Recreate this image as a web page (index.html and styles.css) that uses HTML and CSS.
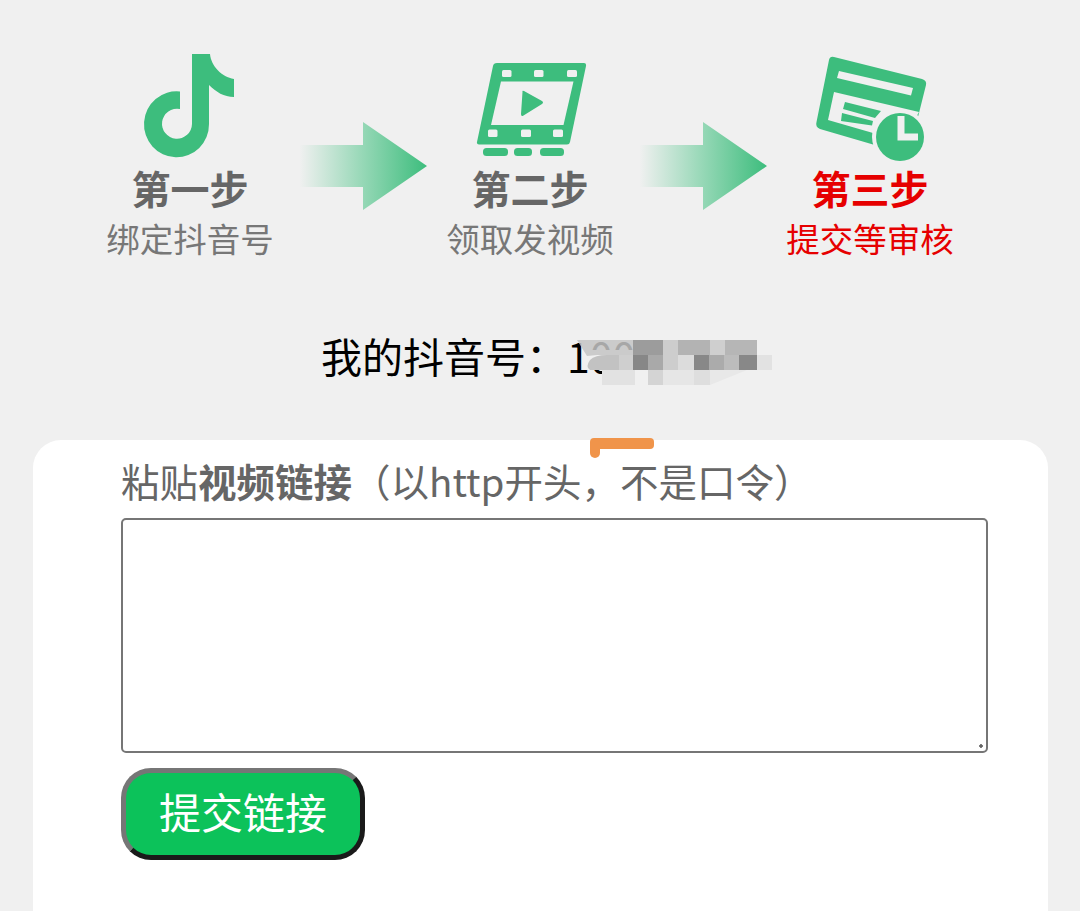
FILE: index.html
```html
<!DOCTYPE html>
<html lang="zh-CN">
<head>
<meta charset="utf-8">
<title>提交链接</title>
<link rel="stylesheet" href="styles.css">
</head>
<body>
<section class="steps">
  <div class="step">
    <svg class="step-icon" viewBox="130 50 120 110"><path class="g" d="M192 54H210C211 66 222 77 234 79V97C224 97 216 92 209 85V124A32.500 33 0 1 1 180 91.500V109A15 15 0 1 0 192 124Z"/></svg>
    <div class="step-title">第一步</div>
    <div class="step-sub">绑定抖音号</div>
  </div>
  <svg class="arrow" viewBox="0 0 130 90"><defs><linearGradient id="ag" x1="0" x2="1" y1="0" y2="0"><stop offset="0.02" stop-color="#f0f0f0"/><stop offset="0.5" stop-color="#97d8b7"/><stop offset="1" stop-color="#3dbd7d"/></linearGradient></defs><path fill="url(#ag)" d="M0 23H66V0L130 44L66 88V65H0Z"/></svg>
  <div class="step">
    <svg class="step-icon" viewBox="470 50 120 110">
      <path class="g" d="M497 63H584Q586.500 63 586 66L570 142Q569.500 144.500 567 144.500H479Q476.500 144.500 477 142L493 66Q493.500 63 497 63Z"/>
      <path class="w" d="M501 81.500H573.500L563.500 125H491Z"/>
      <path class="g" d="M524 91Q522 90 522.500 92L521 114Q521 117 523.500 115.500L542 104Q544 102.500 542 101Z"/>
      <rect class="w" x="502" y="70" width="9.500" height="7" rx="1.500"/><rect class="w" x="534" y="70" width="9.500" height="7" rx="1.500"/><rect class="w" x="567" y="70" width="10" height="7" rx="1.500"/>
      <rect class="w" x="488" y="129.500" width="9.500" height="7.500" rx="1.500"/><rect class="w" x="521" y="129.500" width="10" height="7.500" rx="1.500"/><rect class="w" x="553" y="129.500" width="10" height="7.500" rx="1.500"/>
      <rect class="g" x="483" y="148" width="25" height="8" rx="3.500"/><rect class="g" x="514" y="148" width="18" height="8" rx="3.500"/><rect class="g" x="540" y="148" width="24" height="8" rx="3.500"/>
    </svg>
    <div class="step-title">第二步</div>
    <div class="step-sub">领取发视频</div>
  </div>
  <svg class="arrow" viewBox="0 0 130 90"><path fill="url(#ag)" d="M0 23H66V0L130 44L66 88V65H0Z"/></svg>
  <div class="step">
    <svg class="step-icon" viewBox="810 50 120 110">
      <path class="g" d="M834 57L922 79Q927 80.500 926 85L916 125L873 144.500L820 129Q815 127 816.500 122L829 60Q830 56 834 57Z"/>
      <path class="w" d="M839 71L913 88L911 95.500L837 78Z"/>
      <path class="w" d="M834 92L919 112L905 137L873 133L828 120Z"/>
      <path class="g" d="M845 102L881 111L875 118L843 109Z"/>
      <path class="g" d="M842 113L873 121L872 125.500L841 121Z"/>
      <circle class="w" cx="900" cy="137" r="28"/>
      <circle class="g" cx="900" cy="137" r="24"/>
      <path class="hand" d="M901 116V137H918"/>
    </svg>
    <div class="step-title red">第三步</div>
    <div class="step-sub red">提交等审核</div>
  </div>
</section>

<div class="account">
  <span>我的抖音号&#xFF1A;100</span>
  <svg class="mosaic" viewBox="0 0 220 70" aria-hidden="true">
    <path fill="#f0f0f0" d="M27 20H76V40H27Z"/>
    <path fill="#c4c4c4" opacity="0.85" d="M20 10H76V25H40L30 26Z"/>
    <path fill="#c2c2c2" d="M33 40Q28 37 33 30Q38 25 50 25H62V40Z"/>
    <rect fill="#cfcfcf" x="62" y="25" width="16" height="15"/>
    <rect fill="#9c9c9c" x="76" y="10" width="30" height="15"/>
    <rect fill="#cdcdcd" x="106" y="10" width="15" height="15"/>
    <rect fill="#b3b3b3" x="121" y="10" width="32" height="15"/>
    <rect fill="#cfcfcf" x="153" y="10" width="15" height="15"/>
    <rect fill="#b6b6b6" x="168" y="10" width="32" height="15"/>
    <rect fill="#878787" x="76" y="25" width="15" height="15"/>
    <rect fill="#a9a9a9" x="91" y="25" width="15" height="15"/>
    <rect fill="#cdcdcd" x="106" y="25" width="15" height="15"/>
    <rect fill="#dcdcdc" x="121" y="25" width="16" height="15"/>
    <rect fill="#888888" x="137" y="25" width="15" height="15"/>
    <rect fill="#ababab" x="152" y="25" width="15" height="15"/>
    <rect fill="#bcbcbc" x="167" y="25" width="15" height="15"/>
    <rect fill="#888888" x="182" y="25" width="18" height="15"/>
    <rect fill="#e2e2e2" x="200" y="25" width="15" height="15"/>
    <rect fill="#e2e2e2" x="45" y="40" width="33" height="15"/>
    <rect fill="#d4d4d4" x="91" y="40" width="15" height="15"/>
    <rect fill="#e6e6e6" x="106" y="40" width="31" height="15"/>
    <rect fill="#dedede" x="137" y="40" width="16" height="15"/>
    <path fill="#e8e8e8" d="M153 40H190L153 55Z"/>
  </svg>
</div>

<main class="card">
  <span class="flag" aria-hidden="true"></span>
  <label class="label" for="link">粘贴<b>视频链接</b>&#xFF08;以http开头&#xFF0C;不是口令&#xFF09;</label>
  <textarea class="input" id="link"></textarea>
  <button class="submit" type="button">提交链接</button>
</main>
</body>
</html>
```
FILE: styles.css
```css
* { box-sizing: border-box; }
html, body { margin: 0; height: 911px; overflow: hidden; }
body {
  background: #f0f0f0;
  font-family: "Noto Sans CJK SC", "Noto Sans", sans-serif;
  color: #000;
}
.steps {
  display: flex;
  align-items: flex-start;
  padding: 50px 0 0 107px;
  height: 300px;
}
.step {
  width: 166px;
  flex: none;
  display: flex;
  flex-direction: column;
  align-items: center;
}
.step-icon { width: 120px; height: 110px; display: block; flex: none; overflow: visible; }
.g { fill: #3dbd7d; }
.w { fill: #f0f0f0; }
.hand { fill: none; stroke: #f0f0f0; stroke-width: 7; }
.step-title {
  font-size: 39px;
  line-height: 46px;
  font-weight: 700;
  color: #666;
  margin-top: 4px;
  white-space: nowrap;
}
.step-sub {
  font-size: 33.500px;
  line-height: 48px;
  color: #777;
  margin-top: 4px;
  white-space: nowrap;
}
.step-title.red, .step-sub.red { color: #e60000; }
.arrow {
  flex: none;
  width: 130px;
  height: 90px;
  margin: 72px 20px 0 24px;
}
.account {
  position: relative;
  height: 140px;
  padding: 25px 0 0 321px;
  font-size: 41px;
  line-height: 60px;
}
.mosaic {
  position: absolute;
  left: 557px;
  top: 30px;
  width: 220px;
  height: 70px;
}
.card {
  position: relative;
  margin: 0 32px 0 33px;
  height: 471px;
  background: #fff;
  border-radius: 28px 28px 0 0;
  padding: 16px 60px 0 88px;
}
.flag {
  position: absolute;
  left: 557px;
  top: -2px;
  width: 64px;
  height: 11px;
  background: #f0944a;
  border-radius: 4px;
}
.flag::after {
  content: "";
  position: absolute;
  left: 0;
  top: 4px;
  width: 10px;
  height: 16px;
  background: #f0944a;
  border-radius: 0 0 5px 5px;
}
.label {
  display: block;
  font-size: 38.500px;
  line-height: 48px;
  color: #666;
  white-space: nowrap;
}
.label b { font-weight: 700; }
.input {
  display: block;
  width: 867px;
  height: 235px;
  margin-top: 14px;
  border: 2px solid #767676;
  border-radius: 5px;
  resize: none;
  background: #fff radial-gradient(circle, #666 1.5px, transparent 2px) no-repeat right 2px bottom 2px / 6px 6px;
}
.submit {
  display: block;
  width: 244px;
  height: 92px;
  margin-top: 15px;
  padding: 0 0 8px;
  border: 5px solid;
  border-color: #767676 #1a1a1a #1a1a1a #767676;
  border-radius: 30px;
  background: #0cc25a;
  color: #fff;
  font-family: inherit;
  font-size: 42px;
}
```
